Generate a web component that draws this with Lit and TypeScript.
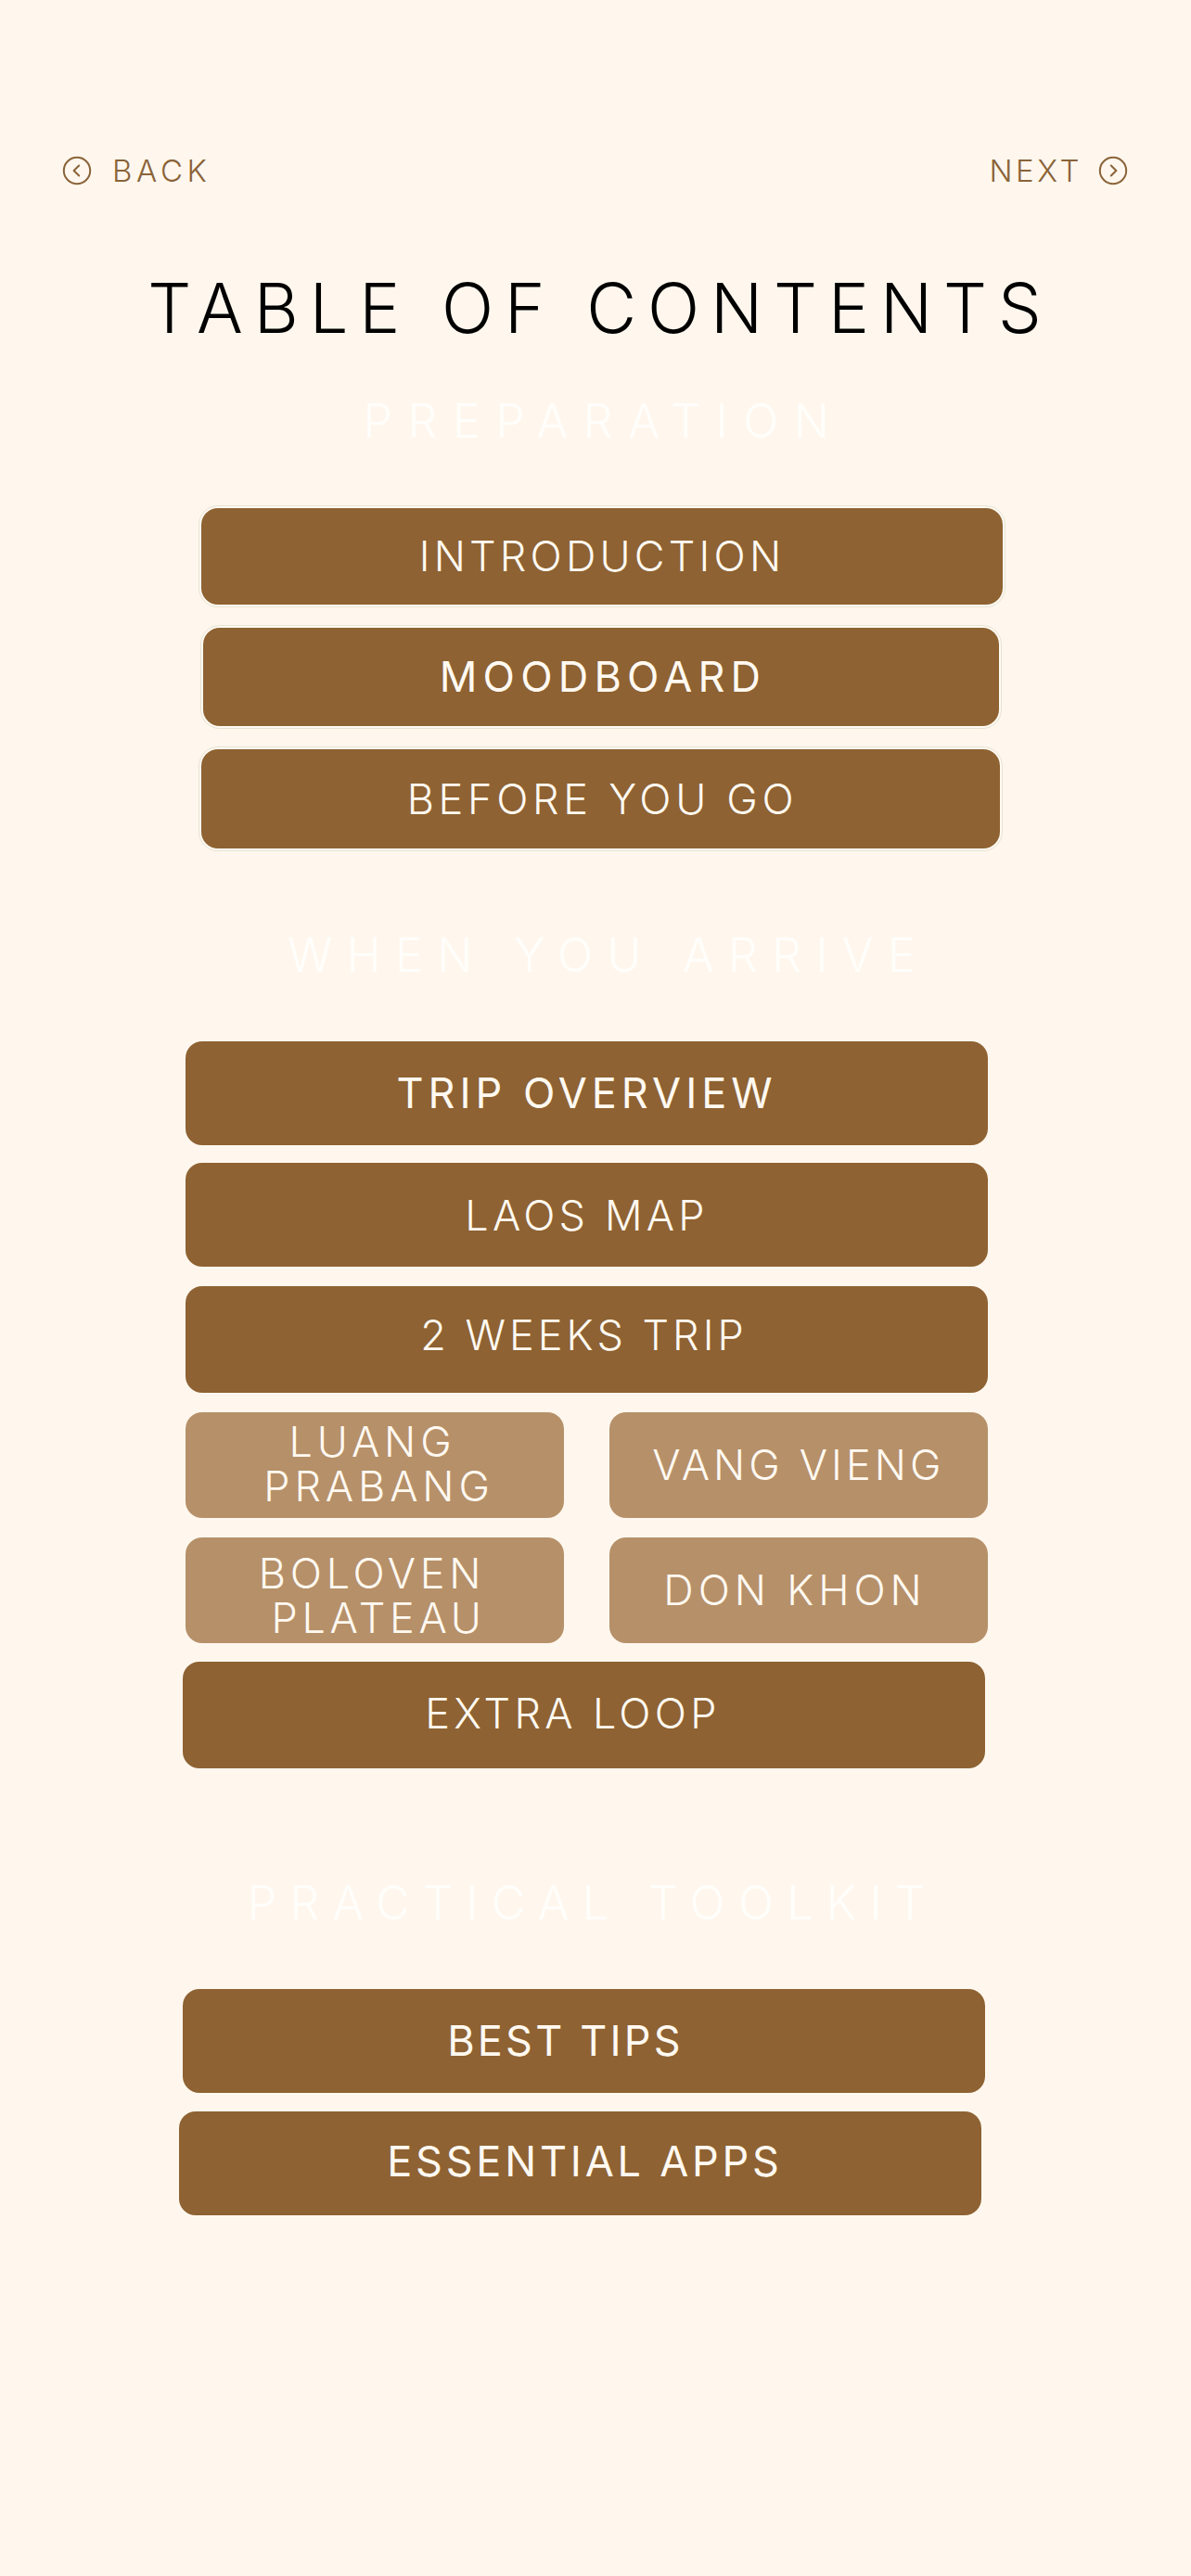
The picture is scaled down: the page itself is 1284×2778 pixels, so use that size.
import { LitElement, html, css } from "lit";
import { customElement } from "lit/decorators.js";

type Item = { lines: string[]; cls: string };

const preparation: Item[] = [
  { lines: ["INTRODUCTION"], cls: "outlined intro" },
  { lines: ["MOODBOARD"], cls: "outlined mood medium" },
  { lines: ["BEFORE YOU GO"], cls: "outlined before" },
];

const arrive: Item[] = [
  { lines: ["TRIP OVERVIEW"], cls: "wide overview medium" },
  { lines: ["LAOS MAP"], cls: "wide map" },
  { lines: ["2 WEEKS TRIP"], cls: "wide weeks" },
];

const cities: Item[] = [
  { lines: ["LUANG", "PRABANG"], cls: "city prabang" },
  { lines: ["VANG VIENG"], cls: "city vang" },
  { lines: ["BOLOVEN", "PLATEAU"], cls: "city boloven" },
  { lines: ["DON KHON"], cls: "city khon" },
];

const chevron = (d: string) => html`
  <svg class="icon" viewBox="0 0 32 32" aria-hidden="true">
    <circle cx="16" cy="16" r="14.2"></circle>
    <path d=${d}></path>
  </svg>
`;

@customElement("app-root")
export class AppRoot extends LitElement {
  static styles = css`
    :host {
      display: block;
      min-height: 2778px;
      background: #fff7ee;
      font-family: Inter, "Liberation Sans", sans-serif;
      overflow: hidden;
    }

    .nav {
      display: flex;
      justify-content: space-between;
      align-items: center;
      padding: 164px 68px 0 67px;
      height: 40px;
      color: #8a6338;
      font-size: 33px;
      font-weight: 300;
      line-height: 40px;
    }

    .nav span {
      display: flex;
      align-items: center;
    }

    .back {
      gap: 22px;
      letter-spacing: 4.6px;
    }

    .next {
      gap: 17px;
      letter-spacing: 3.6px;
    }

    .icon {
      width: 32px;
      height: 32px;
      fill: none;
      stroke: #8a6338;
      stroke-width: 2;
      stroke-linecap: round;
      stroke-linejoin: round;
    }

    h1 {
      margin: 0;
      padding: 83px 0 0 10px;
      height: 90px;
      line-height: 90px;
      text-align: center;
      color: #000;
      font-size: 74px;
      font-weight: 300;
      letter-spacing: 11.9px;
      white-space: nowrap;
    }

    h2 {
      margin: 0;
      color: #fffefb;
      font-size: 50px;
      font-weight: 300;
      line-height: 60px;
      text-align: center;
      white-space: nowrap;
    }

    .prep-title {
      padding: 47px 0 0 18px;
      letter-spacing: 16.6px;
      margin-bottom: 64px;
    }

    .arrive-title {
      padding: 85px 0 0 28px;
      letter-spacing: 15.4px;
      margin-bottom: 63px;
    }

    .toolkit-title {
      padding: 115px 6px 0 0;
      letter-spacing: 14.4px;
      margin-bottom: 63px;
    }

    .btn {
      display: flex;
      align-items: center;
      justify-content: center;
      box-sizing: border-box;
      height: 112px;
      border-radius: 18px;
      background: #8e6232;
      color: #fff9f1;
      font-size: 45px;
      font-weight: 300;
      line-height: 48px;
      text-align: center;
      white-space: nowrap;
    }

    .btn span {
      display: block;
    }

    .medium {
      font-weight: 400;
    }

    .outlined {
      box-shadow: 0 0 0 2px #fffaf2, 0 0 0 3px #e8e2d2;
    }

    .intro {
      width: 864px;
      height: 104px;
      margin-left: 217px;
      letter-spacing: 4.2px;
    }

    .mood {
      width: 858px;
      height: 106px;
      margin: 25px 0 0 219px;
      padding-left: 4px;
      letter-spacing: 6.2px;
    }

    .before {
      width: 861px;
      height: 107px;
      margin: 25px 0 0 217px;
      padding-left: 4px;
      letter-spacing: 4.7px;
    }

    .wide {
      width: 865px;
      margin-left: 200px;
    }

    .overview {
      letter-spacing: 5px;
    }

    .map {
      margin-top: 19px;
      padding-top: 2px;
      letter-spacing: 4.2px;
    }

    .weeks {
      margin-top: 21px;
      height: 115px;
      padding: 0 6px 10px 0;
      letter-spacing: 4px;
    }

    .cities {
      display: grid;
      grid-template-columns: 408px 408px;
      column-gap: 49px;
      row-gap: 21px;
      margin: 21px 0 0 200px;
    }

    .city {
      height: 114px;
      background: #b69069;
    }

    .prabang {
      padding: 0 0 2px 3px;
      letter-spacing: 4.9px;
    }

    .vang {
      letter-spacing: 4.1px;
    }

    .boloven {
      padding: 12px 0 0 2px;
      letter-spacing: 4.7px;
    }

    .khon {
      padding-right: 8px;
      letter-spacing: 4.9px;
    }

    /* the two-line labels sit slightly staggered */
    .city span:first-child:not(:last-child) {
      margin-right: 8px;
    }

    .city span:last-child:not(:first-child) {
      margin-left: 6px;
    }

    .city.prabang,
    .city.boloven {
      flex-direction: column;
    }

    .extra {
      width: 865px;
      height: 115px;
      margin: 20px 0 0 197px;
      padding: 0 24px 4px 0;
      letter-spacing: 4.3px;
    }

    .tips {
      width: 865px;
      margin-left: 197px;
      padding-right: 40px;
      letter-spacing: 3.2px;
    }

    .apps {
      width: 865px;
      margin: 20px 0 0 193px;
      padding: 0 0 4px 10px;
      letter-spacing: 3.8px;
    }
  `;

  private renderItem(item: Item) {
    return html`<div class="btn ${item.cls}">
      ${item.lines.map((line) => html`<span>${line}</span>`)}
    </div>`;
  }

  render() {
    return html`
      <div class="nav">
        <span class="back">${chevron("M18.2 10.5 12.6 16l5.6 5.5")} BACK</span>
        <span class="next">NEXT ${chevron("M13.8 10.5 19.4 16l-5.6 5.5")}</span>
      </div>
      <h1>TABLE OF CONTENTS</h1>

      <h2 class="prep-title">PREPARATION</h2>
      ${preparation.map((item) => this.renderItem(item))}

      <h2 class="arrive-title">WHEN YOU ARRIVE</h2>
      ${arrive.map((item) => this.renderItem(item))}
      <div class="cities">${cities.map((item) => this.renderItem(item))}</div>
      <div class="btn extra"><span>EXTRA LOOP</span></div>

      <h2 class="toolkit-title">PRACTICAL TOOLKIT</h2>
      <div class="btn tips medium"><span>BEST TIPS</span></div>
      <div class="btn apps medium"><span>ESSENTIAL APPS</span></div>
    `;
  }
}
